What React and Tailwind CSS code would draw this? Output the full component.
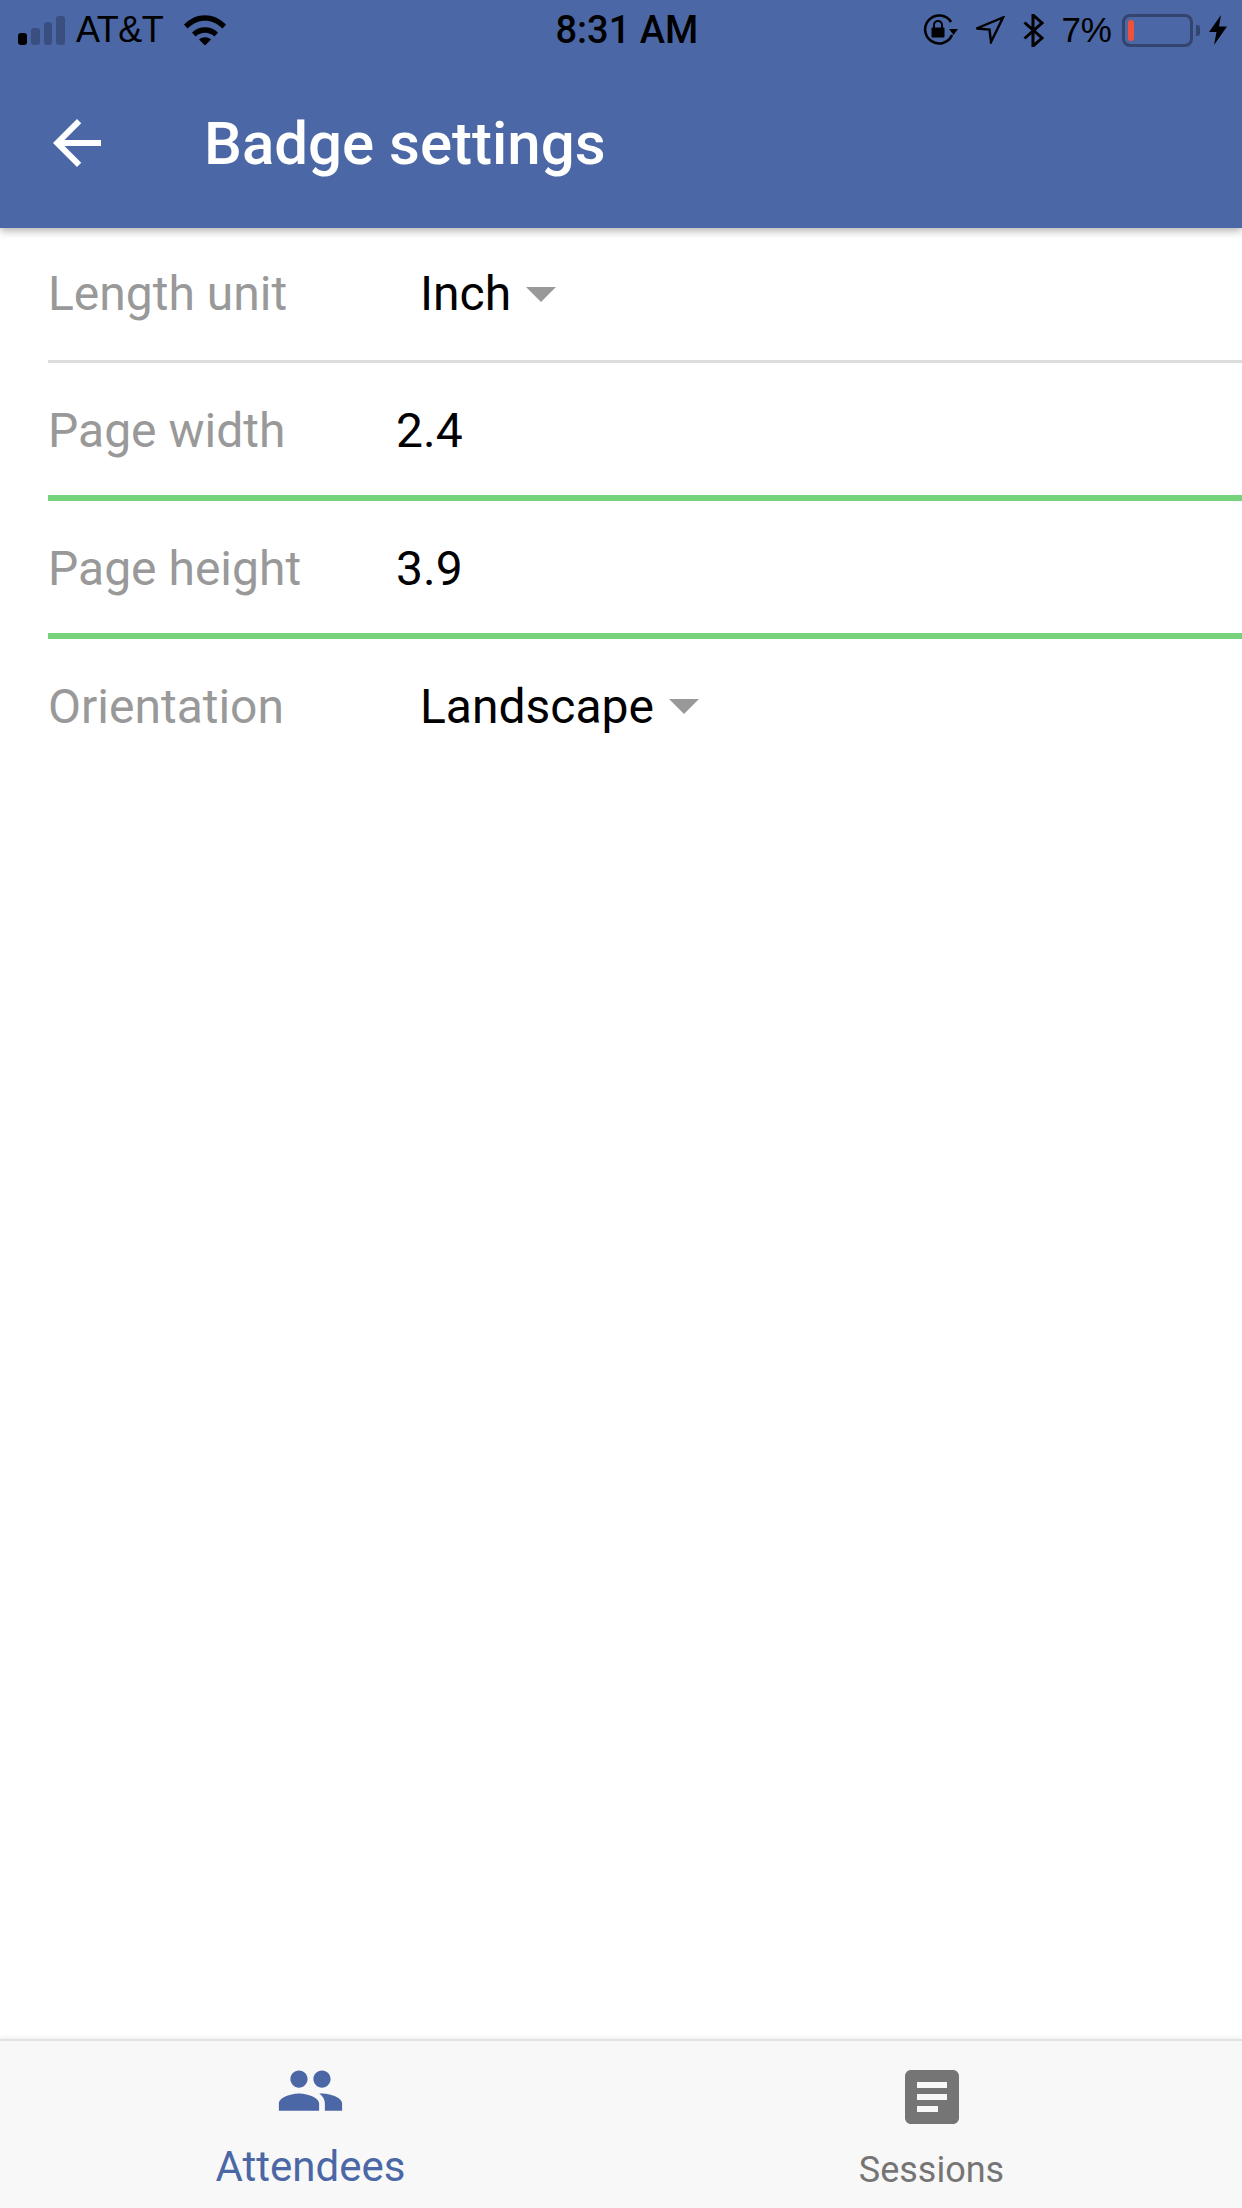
const Signal = () => (
  <div className="flex items-end gap-[4px] w-[47px] h-[29px]">
    <div className="w-[9px] h-[12px] rounded-[3px] bg-black" />
    <div className="w-[9px] h-[17px] rounded-[3px] bg-[#3a4f80]" />
    <div className="w-[9px] h-[23px] rounded-[3px] bg-[#3a4f80]" />
    <div className="w-[9px] h-[29px] rounded-[3px] bg-[#3a4f80]" />
  </div>
);

const Wifi = () => (
  <svg width="42" height="30" viewBox="0 0 42 30">
    <path d="M0 9.5C12 -3 30 -3 42 9.5L38.5 13.5C28 3 14 3 3.5 13.5Z" fill="#000" />
    <path d="M8 17.5C15 10.5 27 10.5 34 17.5L30.5 21.5C25 16.5 17 16.5 11.500 21.500Z" fill="#000" />
    <path d="M15 24.500C18.500 21.500 23.500 21.500 27 24.500L21 30.500Z" fill="#000" />
  </svg>
);

const RotationLock = () => (
  <svg width="36" height="32" viewBox="0 0 36 32" fill="none">
    <path d="M30 21A14 14 0 1 1 29 8" stroke="#000" strokeWidth="2.6" />
    <path d="M27 15h9l-4.500 6z" fill="#000" />
    <rect x="9.500" y="13.500" width="13" height="10" rx="1" fill="#000" />
    <path d="M12 14v-3a4 4 0 0 1 8 0v3" stroke="#000" strokeWidth="2" />
  </svg>
);

const LocationArrow = () => (
  <svg width="30" height="28" viewBox="0 0 30 28" fill="none">
    <path d="M1.500 12.500L28 1.500L16 26L14.500 13.500Z" stroke="#000" strokeWidth="2.400" strokeLinejoin="miter" />
  </svg>
);

const Bluetooth = () => (
  <svg width="21" height="33" viewBox="0 0 21 33" fill="none">
    <path d="M1.500 8.500L19 24L10 32V1L19 9L1.500 24.500" stroke="#000" strokeWidth="3" />
  </svg>
);

const Battery = () => (
  <div className="flex items-center gap-[3px]">
    <div className="w-[71px] h-[33px] rounded-[8px] border-[3px] border-[#33456f] p-[3px] flex">
      <div className="w-[6px] rounded-[3px] bg-[#f0513a]" />
    </div>
    <div className="w-[4px] h-[11px] rounded-r-[3px] bg-[#33456f]" />
  </div>
);

const Bolt = () => (
  <svg width="18" height="30" viewBox="0 0 18 30">
    <path d="M12 0L0 17H7.500L5 30L18 11.500H10Z" fill="#000" />
  </svg>
);

const Caret = () => (
  <div className="w-0 h-0 border-x-[15px] border-x-transparent border-t-[15px] border-t-[#999999]" />
);

const SelectRow = ({ label, value }) => (
  <div className="ml-[48px] h-[135px] flex items-center border-b-[3px] border-[#dddddd] last:border-b-0">
    <span className="w-[372px] text-[48px] text-[#999999]">{label}</span>
    <span className="text-[48px] text-black mr-[15px]">{value}</span>
    <Caret />
  </div>
);

const InputRow = ({ label, value }) => (
  <div className="ml-[48px] h-[138px] pt-[3px] flex items-center border-b-[6px] border-[#76d27b]">
    <span className="w-[348px] text-[48px] text-[#999999]">{label}</span>
    <span className="text-[48px] text-black">{value}</span>
  </div>
);

const App = () => {
  return (
    <div className="w-full h-[2208px] flex flex-col bg-white font-['Roboto',sans-serif]">
      <div className="relative z-10 h-[228px] bg-[#4b67a5] shadow-[0_3px_8px_rgba(0,0,0,0.3)]">
        <div className="h-[60px] pl-[18px] pr-[15px] flex items-center text-black font-['Liberation_Sans',sans-serif]">
          <div className="flex-1 flex items-center">
            <Signal />
            <span className="ml-[11px] text-[36px] tracking-[-0.5px]">AT&amp;T</span>
            <div className="ml-[21px]">
              <Wifi />
            </div>
          </div>
          <span className="ml-[8px] text-[38px] w-[142px] text-center whitespace-nowrap font-medium font-['Roboto',sans-serif]">8:31 AM</span>
          <div className="flex-1 flex items-center justify-end">
            <RotationLock />
            <div className="ml-[17px]">
              <LocationArrow />
            </div>
            <div className="ml-[18px]">
              <Bluetooth />
            </div>
            <span className="ml-[17px] text-[35px]">7%</span>
            <div className="ml-[10px]">
              <Battery />
            </div>
            <div className="ml-[9px]">
              <Bolt />
            </div>
          </div>
        </div>
        <div className="h-[168px] flex items-center">
          <svg className="ml-[41px] mt-[-2px]" width="72" height="72" viewBox="0 0 24 24" fill="#fff">
            <path d="M20 11H7.830l5.590-5.590L12 4l-8 8 8 8 1.410-1.410L7.830 13H20v-2z" />
          </svg>
          <h1 className="ml-[91px] text-[60px] font-medium text-white">Badge settings</h1>
        </div>
      </div>

      <div className="flex-1">
        <SelectRow label="Length unit" value="Inch" />
        <InputRow label="Page width" value="2.4" />
        <InputRow label="Page height" value="3.9" />
        <SelectRow label="Orientation" value="Landscape" />
      </div>

      <div className="h-[169px] bg-[#f8f8f8] border-t-[2px] border-[#e2e2e2] shadow-[0_-2px_4px_rgba(0,0,0,0.06)] flex">
        <div className="w-[621px] flex flex-col items-center">
          <svg className="mt-[15px]" width="69" height="69" viewBox="0 0 24 24" fill="#4b67a5">
            <path d="M16 11c1.660 0 2.990-1.340 2.990-3S17.660 5 16 5s-3 1.340-3 3 1.340 3 3 3zm-8 0c1.660 0 2.990-1.340 2.990-3S9.660 5 8 5 5 6.340 5 8s1.340 3 3 3zm0 2c-2.330 0-7 1.170-7 3.500V19h14v-2.500c0-2.330-4.670-3.500-7-3.500zm8 0c-.290 0-.620.020-.970.050 1.160.840 1.970 1.970 1.970 3.450V19h6v-2.500c0-2.330-4.670-3.500-7-3.500z" />
          </svg>
          <span className="mt-[10px] text-[42px] text-[#4b67a5]">Attendees</span>
        </div>
        <div className="w-[621px] flex flex-col items-center">
          <svg className="mt-[20px]" width="72" height="72" viewBox="0 0 24 24" fill="#757575">
            <path d="M19 3H5c-1.100 0-2 .9-2 2v14c0 1.100.9 2 2 2h14c1.100 0 2-.9 2-2V5c0-1.100-.9-2-2-2zm-5 14H7v-2h7v2zm3-4H7v-2h10v2zm0-4H7V7h10v2z" />
          </svg>
          <span className="mt-[10px] text-[36px] text-[#757575]">Sessions</span>
        </div>
      </div>
    </div>
  );
};

export default App;
